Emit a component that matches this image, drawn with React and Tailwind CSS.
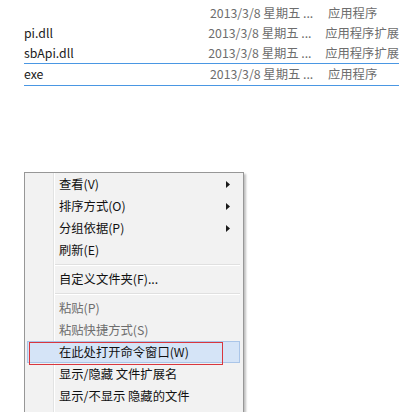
import React from 'react';

const files = [
  { name: '', date: '2013/3/8 星期五 ...', type: '应用程序' },
  { name: 'pi.dll', date: '2013/3/8 星期五 ...', type: '应用程序扩展' },
  { name: 'sbApi.dll', date: '2013/3/8 星期五 ...', type: '应用程序扩展' },
  { name: 'exe', date: '2013/3/8 星期五 ...', type: '应用程序', focused: true },
];

// menu entries, 'sep' draws a separator line
const menu = [
  { label: '查看(V)', sub: true },
  { label: '排序方式(O)', sub: true },
  { label: '分组依据(P)', sub: true },
  { label: '刷新(E)' },
  'sep',
  { label: '自定义文件夹(F)...' },
  'sep',
  { label: '粘贴(P)', disabled: true },
  { label: '粘贴快捷方式(S)', disabled: true },
  { label: '在此处打开命令窗口(W)', active: true },
  { label: '显示/隐藏 文件扩展名' },
  { label: '显示/不显示 隐藏的文件' },
  { label: '' },
];

function Arrow() {
  return (
    <svg width="4" height="7" viewBox="0 0 4 7" className="ml-auto">
      <polygon points="0,0 4,3.5 0,7" fill="#1a1a1a" />
    </svg>
  );
}

export default function App() {
  return (
    <div
      className="relative h-[412px] w-[399px] overflow-hidden bg-white text-[12.3px]"
      style={{ fontFamily: '"Noto Sans CJK SC", "Noto Sans", sans-serif' }}
    >
      {/* File list */}
      <div className="pt-[3px]">
        {files.map((f, i) => (
          <div key={i} className="ml-[24px]">
            {f.focused && <div className="h-px bg-[#4a97e3]" />}
            <div
              className={`flex items-center whitespace-nowrap ${
                f.focused ? 'h-[21px]' : 'h-[20px]'
              }`}
            >
              <div className="w-[186px] text-[#1a1a1a]">{f.name}</div>
              <div className="w-[118px] text-[#6d6d6d]">{f.date}</div>
              <div className="text-[#6d6d6d]">{f.type}</div>
            </div>
            {f.focused && <div className="h-px bg-[#4a97e3]" />}
          </div>
        ))}
      </div>

      {/* Context menu */}
      <div className="absolute left-[24px] top-[172px] w-[220px] h-[260px] border border-[#979797] bg-[#f2f2f2] shadow-[2px_2px_2px_rgba(0,0,0,0.25)]">
        <div className="absolute top-0 bottom-0 left-[28px] flex w-[2px]">
          <div className="h-full w-px bg-[#e2e3e3]" />
          <div className="h-full w-px bg-white" />
        </div>
        <div className="relative">
          {menu.map((m, i) =>
            m === 'sep' ? (
              <div key={i} className="ml-[30px] mr-[3px] flex h-[7px] flex-col justify-center">
                <div className="h-px bg-[#e0e0e0]" />
                <div className="h-px bg-white" />
              </div>
            ) : (
              <div
                key={i}
                className={`ml-[2px] mr-[3px] flex h-[22px] items-center pl-[31px] pr-[9px] ${
                  m.active ? 'border border-[#aac5e8] bg-[#d5e4f7]' : 'border border-transparent'
                } ${m.disabled ? 'text-[#6d6d6d]' : 'text-[#111]'}`}
              >
                <span className="whitespace-nowrap">{m.label}</span>
                {m.sub && <Arrow />}
              </div>
            )
          )}
        </div>
      </div>

      {/* Red annotation box */}
      <div className="absolute left-[29px] top-[342px] h-[23px] w-[194px] border border-[#d9363e]" />
    </div>
  );
}
